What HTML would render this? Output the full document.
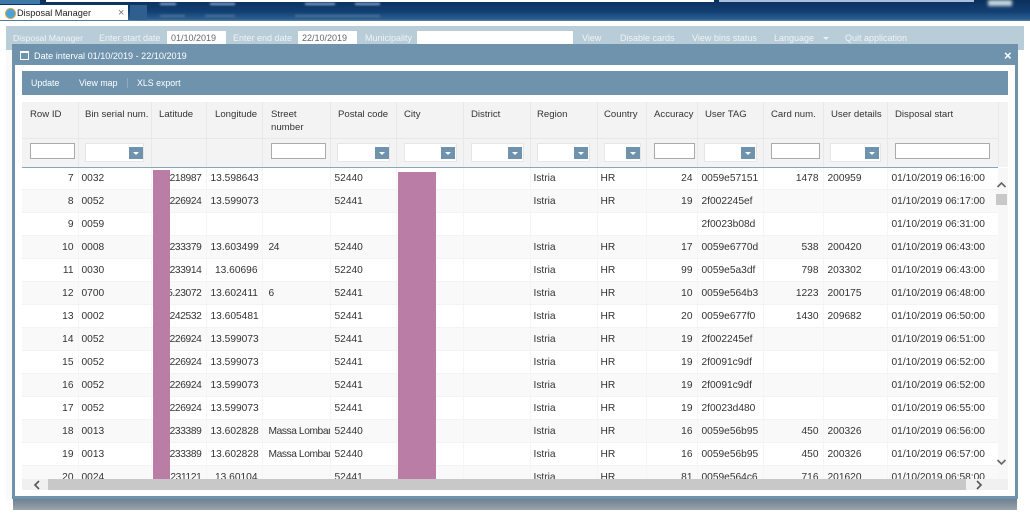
<!DOCTYPE html>
<html lang="en">
<head>
<meta charset="utf-8">
<title>Disposal Manager</title>
<style>
html,body{margin:0;padding:0;width:1030px;height:514px;overflow:hidden;background:#fff}
#r{position:relative;width:1030px;height:514px;overflow:hidden;font:9px "Liberation Sans",sans-serif;color:#333;filter:blur(.35px);background:#fff}
#r div,#r span{position:absolute;white-space:nowrap}
.t{color:#eef3f6;line-height:14px;top:31px}
.w{color:#fff;line-height:14px}
.b{background:#fff}
.h{line-height:12.5px;top:109px;color:#333;font-size:9.6px}
.i{top:143px;height:14px;background:#fff;border:1px solid #aaa;box-sizing:content-box}
.s{top:143px;height:17px;background:#fff;border:1px solid #e6e6e6}
.k{top:147px;width:14px;height:12px;background:#6f93ad}
.k:after{content:"";position:absolute;left:4px;top:5px;border:3px solid transparent;border-top-color:#fff;border-bottom:0}
.v{top:102px;width:1px;height:65px;background:#e8e8e8}
table{position:absolute;left:0;top:0;border-collapse:collapse;table-layout:fixed;width:976px}
td{height:20px;padding:2px 4px 0;border-bottom:1px solid #f3f3f3;border-right:1px solid #f5f5f5;overflow:hidden;white-space:nowrap;box-sizing:content-box;font-size:10.2px;line-height:20px;color:#333}
tr:nth-child(even) td{background:#f9f9f9}
td:nth-child(1),td:nth-child(3),td:nth-child(4),td:nth-child(11),td:nth-child(13){text-align:right}
td:nth-child(2),td:nth-child(9),td:nth-child(10){padding-left:3px}
td:nth-child(3){letter-spacing:-.35px}
td:nth-child(5){padding:2px 0 0 6px;letter-spacing:-.4px}
</style>
</head>
<body>
<div id="r">
<!-- browser chrome -->
<div style="left:0;top:0;width:1030px;height:21px;background:linear-gradient(#0c2f5c,#123f73 55%,#2a5e90 90%,#5d7f9f)"></div>
<div style="left:46px;top:0;width:668px;height:2px;background:#fff"></div>
<div style="left:719px;top:0;width:255px;height:2px;background:#a9c1dc"></div>
<div style="left:0;top:0;width:40px;height:4px;background:#3d78a8"></div>
<div style="left:160px;top:3px;width:16px;height:2px;background:#8fb0cf;filter:blur(1px)"></div>
<div style="left:210px;top:3px;width:25px;height:2px;background:#8fb0cf;filter:blur(1px)"></div>
<div style="left:305px;top:3px;width:30px;height:2px;background:#8fb0cf;filter:blur(1px)"></div>
<div style="left:355px;top:3px;width:25px;height:2px;background:#8fb0cf;filter:blur(1px)"></div>
<div style="left:160px;top:15px;width:25px;height:2px;background:#4f769b;filter:blur(1px)"></div>
<div style="left:205px;top:15px;width:30px;height:2px;background:#4f769b;filter:blur(1px)"></div>
<div style="left:295px;top:15px;width:85px;height:2px;background:#4f769b;filter:blur(1px)"></div>
<div style="left:988px;top:0;width:24px;height:6px;background:#c8d8df;filter:blur(1.5px)"></div>
<div style="left:130px;top:5px;width:17px;height:15px;background:#2f5f8f"></div>
<div style="left:0;top:5px;width:128px;height:15px;background:#fff"></div>
<div style="left:5px;top:8px;width:9px;height:9px;border-radius:50%;background:#4aa3df;border:1px solid #d9a441"></div>
<div style="left:17px;top:6px;line-height:14px;font-size:9.2px;color:#222">Disposal Manager</div>
<div style="left:118px;top:6px;line-height:14px;font-size:11px;color:#777">×</div>

<!-- app menu bar -->
<div style="left:6px;top:26px;width:1018px;height:24px;background:#b9cdd9"></div>
<div class="t" style="left:13px;font-size:8.7px">Disposal Manager</div>
<div class="t" style="left:99px">Enter start date</div>
<div class="b" style="left:167px;top:31px;width:59px;height:14px"></div>
<div style="left:171px;top:31px;line-height:14px;color:#666">01/10/2019</div>
<div class="t" style="left:233px">Enter end date</div>
<div class="b" style="left:298px;top:31px;width:59px;height:14px"></div>
<div style="left:302px;top:31px;line-height:14px;color:#666">22/10/2019</div>
<div class="t" style="left:365px">Municipality</div>
<div class="b" style="left:417px;top:31px;width:156px;height:14px"></div>
<div class="t" style="left:582px">View</div>
<div class="t" style="left:620px">Disable cards</div>
<div class="t" style="left:692px">View bins status</div>
<div class="t" style="left:774px">Language</div>
<div style="left:823px;top:37px;border:3px solid transparent;border-top-color:#e9f0f4;border-bottom:0"></div>
<div class="t" style="left:845px">Quit application</div>
<div style="left:6px;top:50px;width:6px;height:450px;background:#fafafa"></div>

<!-- bottom band -->
<div style="left:13px;top:499px;width:1004px;height:11px;background:linear-gradient(#6e8090,#9aa4ac)"></div>

<!-- window -->
<div style="left:12px;top:44px;width:1006px;height:455px;background:#6f93ad"></div>
<div style="left:15px;top:65px;width:1000px;height:431px;background:#fff"></div>
<div style="left:20px;top:51px;width:7px;height:6px;border:1px solid #fff;border-top-width:2px"></div>
<div class="w" style="left:34px;top:49px;font-size:9.1px">Date interval 01/10/2019 - 22/10/2019</div>
<div style="left:1004px;top:49px;line-height:14px;color:#fff;font-size:13px;font-weight:bold">×</div>

<!-- toolbar -->
<div style="left:22px;top:71px;width:986px;height:24px;background:#6f93ad"></div>
<div class="w" style="left:31px;top:76px;font-size:8.8px">Update</div>
<div class="w" style="left:79px;top:76px;font-size:8.8px">View map</div>
<div style="left:127px;top:78px;width:1px;height:10px;background:#8eaabd"></div>
<div class="w" style="left:137px;top:76px;font-size:8.8px">XLS export</div>

<!-- grid head -->
<div style="left:22px;top:102px;width:986px;height:65px;background:#f3f3f3"></div>
<div style="left:22px;top:138px;width:976px;height:1px;background:#e8e8e8"></div>
<div class="v" style="left:78px"></div><div class="v" style="left:151px"></div><div class="v" style="left:206px"></div><div class="v" style="left:262px"></div><div class="v" style="left:330px"></div><div class="v" style="left:396px"></div><div class="v" style="left:463px"></div><div class="v" style="left:530px"></div><div class="v" style="left:597px"></div><div class="v" style="left:646px"></div><div class="v" style="left:697px"></div><div class="v" style="left:763px"></div><div class="v" style="left:823px"></div><div class="v" style="left:887px"></div><div class="v" style="left:998px"></div>
<div class="h" style="left:30px">Row ID</div>
<div class="h" style="left:85px">Bin serial num.</div>
<div class="h" style="left:159px">Latitude</div>
<div class="h" style="left:215px">Longitude</div>
<div class="h" style="left:271px">Street<br>number</div>
<div class="h" style="left:338px">Postal code</div>
<div class="h" style="left:404px">City</div>
<div class="h" style="left:471px">District</div>
<div class="h" style="left:537px">Region</div>
<div class="h" style="left:604px">Country</div>
<div class="h" style="left:654px">Accuracy</div>
<div class="h" style="left:705px">User TAG</div>
<div class="h" style="left:771px">Card num.</div>
<div class="h" style="left:831px">User details</div>
<div class="h" style="left:895px">Disposal start</div>

<!-- filters -->
<div class="i" style="left:30px;width:43px"></div>
<div class="s" style="left:85px;width:57px"></div><div class="k" style="left:129px"></div>
<div class="i" style="left:271px;width:53px"></div>
<div class="s" style="left:337px;width:51px"></div><div class="k" style="left:375px"></div>
<div class="s" style="left:404px;width:51px"></div><div class="k" style="left:441px"></div>
<div class="s" style="left:471px;width:51px"></div><div class="k" style="left:508px"></div>
<div class="s" style="left:537px;width:51px"></div><div class="k" style="left:574px"></div>
<div class="s" style="left:604px;width:35px"></div><div class="k" style="left:626px"></div>
<div class="i" style="left:654px;width:39px"></div>
<div class="s" style="left:704px;width:51px"></div><div class="k" style="left:741px"></div>
<div class="i" style="left:771px;width:47px"></div>
<div class="s" style="left:830px;width:49px"></div><div class="k" style="left:865px"></div>
<div class="i" style="left:895px;width:93px"></div>

<!-- rows -->
<div style="left:22px;top:167px;width:976px;height:312px;overflow:hidden;background:#fff">
<table>
<colgroup><col style="width:56px"><col style="width:73px"><col style="width:55px"><col style="width:56px"><col style="width:68px"><col style="width:66px"><col style="width:67px"><col style="width:67px"><col style="width:67px"><col style="width:49px"><col style="width:51px"><col style="width:66px"><col style="width:60px"><col style="width:64px"><col style="width:111px"></colgroup>
<tr><td>7</td><td>0032</td><td>45.218987</td><td>13.598643</td><td></td><td>52440</td><td></td><td></td><td>Istria</td><td>HR</td><td>24</td><td>0059e57151</td><td>1478</td><td>200959</td><td>01/10/2019 06:16:00</td></tr>
<tr><td>8</td><td>0052</td><td>45.226924</td><td>13.599073</td><td></td><td>52441</td><td></td><td></td><td>Istria</td><td>HR</td><td>19</td><td>2f002245ef</td><td></td><td></td><td>01/10/2019 06:17:00</td></tr>
<tr><td>9</td><td>0059</td><td></td><td></td><td></td><td></td><td></td><td></td><td></td><td></td><td></td><td>2f0023b08d</td><td></td><td></td><td>01/10/2019 06:31:00</td></tr>
<tr><td>10</td><td>0008</td><td>45.233379</td><td>13.603499</td><td>24</td><td>52440</td><td></td><td></td><td>Istria</td><td>HR</td><td>17</td><td>0059e6770d</td><td>538</td><td>200420</td><td>01/10/2019 06:43:00</td></tr>
<tr><td>11</td><td>0030</td><td>45.233914</td><td>13.60696</td><td></td><td>52240</td><td></td><td></td><td>Istria</td><td>HR</td><td>99</td><td>0059e5a3df</td><td>798</td><td>203302</td><td>01/10/2019 06:43:00</td></tr>
<tr><td>12</td><td>0700</td><td>45.23072</td><td>13.602411</td><td>6</td><td>52441</td><td></td><td></td><td>Istria</td><td>HR</td><td>10</td><td>0059e564b3</td><td>1223</td><td>200175</td><td>01/10/2019 06:48:00</td></tr>
<tr><td>13</td><td>0002</td><td>45.242532</td><td>13.605481</td><td></td><td>52441</td><td></td><td></td><td>Istria</td><td>HR</td><td>20</td><td>0059e677f0</td><td>1430</td><td>209682</td><td>01/10/2019 06:50:00</td></tr>
<tr><td>14</td><td>0052</td><td>45.226924</td><td>13.599073</td><td></td><td>52441</td><td></td><td></td><td>Istria</td><td>HR</td><td>19</td><td>2f002245ef</td><td></td><td></td><td>01/10/2019 06:51:00</td></tr>
<tr><td>15</td><td>0052</td><td>45.226924</td><td>13.599073</td><td></td><td>52441</td><td></td><td></td><td>Istria</td><td>HR</td><td>19</td><td>2f0091c9df</td><td></td><td></td><td>01/10/2019 06:52:00</td></tr>
<tr><td>16</td><td>0052</td><td>45.226924</td><td>13.599073</td><td></td><td>52441</td><td></td><td></td><td>Istria</td><td>HR</td><td>19</td><td>2f0091c9df</td><td></td><td></td><td>01/10/2019 06:52:00</td></tr>
<tr><td>17</td><td>0052</td><td>45.226924</td><td>13.599073</td><td></td><td>52441</td><td></td><td></td><td>Istria</td><td>HR</td><td>19</td><td>2f0023d480</td><td></td><td></td><td>01/10/2019 06:55:00</td></tr>
<tr><td>18</td><td>0013</td><td>45.233389</td><td>13.602828</td><td>Massa Lombar</td><td>52440</td><td></td><td></td><td>Istria</td><td>HR</td><td>16</td><td>0059e56b95</td><td>450</td><td>200326</td><td>01/10/2019 06:56:00</td></tr>
<tr><td>19</td><td>0013</td><td>45.233389</td><td>13.602828</td><td>Massa Lombar</td><td>52440</td><td></td><td></td><td>Istria</td><td>HR</td><td>16</td><td>0059e56b95</td><td>450</td><td>200326</td><td>01/10/2019 06:57:00</td></tr>
<tr><td>20</td><td>0024</td><td>45.231121</td><td>13.60104</td><td></td><td>52441</td><td></td><td></td><td>Istria</td><td>HR</td><td>81</td><td>0059e564c6</td><td>716</td><td>201620</td><td>01/10/2019 06:58:00</td></tr>
</table>
</div>
<div style="left:22px;top:167px;width:976px;height:1px;background:#8aa6bb"></div>

<!-- redactions -->
<div style="left:153px;top:170px;width:17px;height:309px;background:#b97da6"></div>
<div style="left:398px;top:172px;width:38px;height:307px;background:#b97da6"></div>

<!-- scrollbars -->
<div style="left:998px;top:168px;width:10px;height:322px;background:#f7f7f7"></div>
<div style="left:996px;top:194px;width:11px;height:11px;background:#c8c8c8"></div>
<svg style="position:absolute;left:996px;top:181px" width="11" height="8" viewBox="0 0 11 8"><path d="M1.5 6 L5.5 2 L9.5 6" fill="none" stroke="#666" stroke-width="1.6"/></svg>
<svg style="position:absolute;left:996px;top:458px" width="11" height="8" viewBox="0 0 11 8"><path d="M1.5 2 L5.5 6 L9.5 2" fill="none" stroke="#666" stroke-width="1.6"/></svg>
<div style="left:22px;top:479px;width:986px;height:11px;background:#f0f0f0"></div>
<div style="left:48px;top:479px;width:918px;height:11px;background:#c8c8c8"></div>
<svg style="position:absolute;left:33px;top:480px" width="8" height="10" viewBox="0 0 8 10"><path d="M6 1 L2 5 L6 9" fill="none" stroke="#555" stroke-width="1.6"/></svg>
<svg style="position:absolute;left:975px;top:480px" width="8" height="10" viewBox="0 0 8 10"><path d="M2 1 L6 5 L2 9" fill="none" stroke="#555" stroke-width="1.6"/></svg>
</div>
</body>
</html>
